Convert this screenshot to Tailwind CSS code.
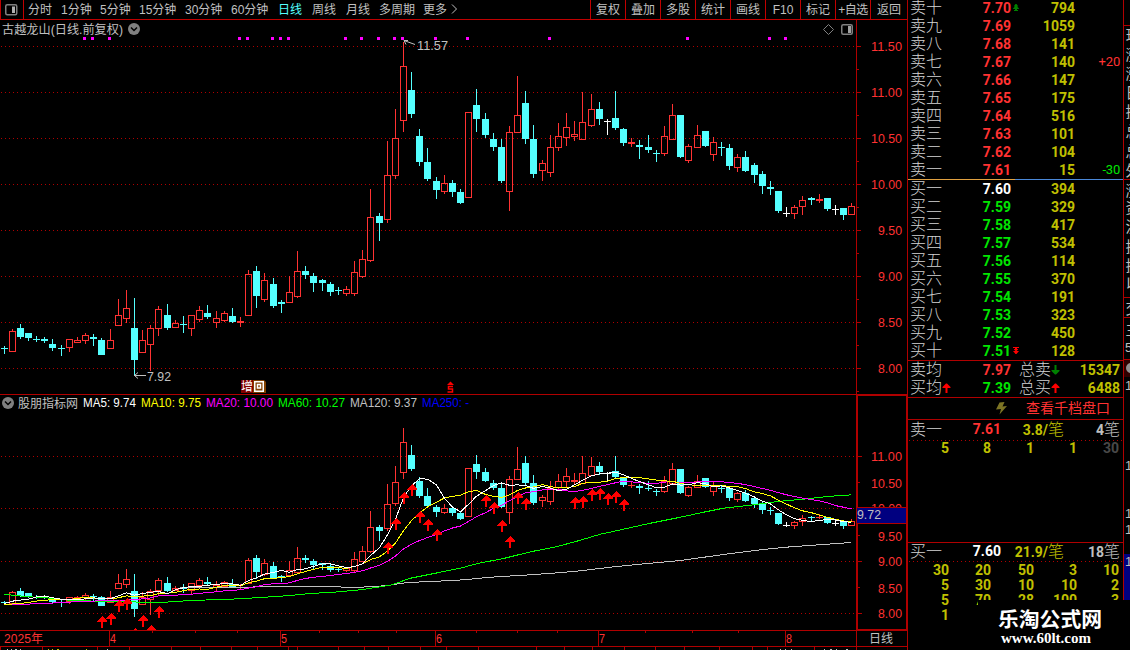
<!DOCTYPE html>
<html lang="zh-CN">
<head>
  <meta charset="UTF-8">
  <meta name="viewport" content="width=device-width, initial-scale=1.0">
  <title>古越龙山 日线</title>
  <script src="https://cdn.jsdelivr.net/npm/@tailwindcss/browser@4"></script>
</head>
<body class="bg-black overflow-hidden">
  <div class="relative flex w-[1130px] h-[650px] bg-black overflow-hidden text-[#c0c0c0] font-['Liberation_Sans','Noto_Sans_CJK_SC',sans-serif]">

    <!-- left: toolbar + charts -->
    <div class="w-[907px] shrink-0 flex flex-col">
      <div class="h-5 shrink-0 flex border-b border-[#c00000] text-[12px] leading-[20px] whitespace-nowrap">
        <div class="w-6 border-x border-[#c00000] flex items-center pl-1">
          <svg width="13" height="12" viewBox="0 0 13 12" fill="none"><rect x="0.75" y="0.75" width="11" height="10" rx="1.5" stroke="#808080" stroke-width="1.5"/><rect x="7" y="2.5" width="3" height="6.5" fill="#b0b0b0"/></svg>
        </div>
        <div class="grid grid-cols-[33px_39px_39px_46px_46px_47px_34px_34px_33px_44px_28px_12px] pl-1 w-[567px]">
          <span>分时</span><span>1分钟</span><span>5分钟</span><span>15分钟</span><span>30分钟</span><span>60分钟</span>
          <span class="text-[#54ffff]">日线</span><span>周线</span><span>月线</span><span>多周期</span><span>更多</span>
          <svg class="mt-1" width="7" height="11" viewBox="0 0 7 11" fill="none"><path d="M1 0.5L5.5 5L1 9.5" stroke="#c0c0c0"/></svg>
        </div>
        <div class="h-[19px] grid grid-cols-[35px_35px_35px_35px_35px_35px_35px_35px_36px] text-center divide-x divide-[#c00000] border-l border-[#c00000]">
          <span>复权</span><span>叠加</span><span>多股</span><span>统计</span><span>画线</span><span>F10</span><span>标记</span><span class="tracking-[-0.5px]">+自选</span><span>返回</span>
        </div>
      </div>
      <svg id="chart" class="block shrink-0" width="907" height="630" viewBox="0 20 907 630"></svg>
    </div>

    <!-- middle: order book -->
    <div class="w-[217px] shrink-0 border-x border-[#b00000] text-[14px] font-bold font-['Roboto','Noto_Sans_CJK_SC',sans-serif]">
      <div id="sells" class="-mt-px h-[180px]"></div>
      <div class="h-px flex"><div class="w-[107px] bg-[#e0a040]"></div><div class="flex-1 bg-[#4a88d8]"></div></div>
      <div id="buys" class="h-[180px]"></div>

      <div class="h-[37px] border-t border-[#b00000]">
        <div class="h-[18px] grid grid-cols-[35px_66px_8px_32px_8px_61px] pl-[2px] leading-[18px]">
          <span class="text-[16px] font-light text-[#d4d4d4]">卖均</span>
          <span class="text-right text-[#ff3232]">7.97</span><span></span>
          <span class="text-[16px] font-light text-[#d4d4d4]">总卖</span>
          <svg class="mt-1" width="9" height="10" viewBox="0 0 9 10"><path d="M3.5 0h2v5h3v1L5 9.5H4L0.5 6V5h3z" fill="#008000"/></svg>
          <span class="text-right text-[#c0c000]">15347</span>
        </div>
        <div class="h-[18px] grid grid-cols-[32px_69px_8px_32px_8px_61px] pl-[2px] leading-[18px]">
          <span class="text-[16px] font-light text-[#d4d4d4]">买均</span>
          <span class="flex justify-between text-[#00e600]"><svg class="mt-1" width="9" height="10" viewBox="0 0 9 10"><path d="M3.5 10h2V5h3V4L5 .5H4L.5 4v1h3z" fill="#ff0000"/></svg>7.39</span><span></span>
          <span class="text-[16px] font-light text-[#d4d4d4]">总买</span>
          <svg class="mt-1" width="9" height="10" viewBox="0 0 9 10"><path d="M3.5 10h2V5h3V4L5 .5H4L.5 4v1h3z" fill="#ff0000"/></svg>
          <span class="text-right text-[#c0c000]">6488</span>
        </div>
      </div>

      <div class="h-[22px] border-t border-[#b00000] flex items-center pl-[88px]">
        <svg width="11" height="13" viewBox="0 0 11 13"><path d="M3.5 0.5L8.5 0L6.5 4.5L11 4L3.5 12.5L5 7L0 7.5z" fill="#7c7424"/></svg>
        <span class="ml-[19px] text-[14px] font-normal text-[#ff3232]">查看千档盘口</span>
      </div>

      <div class="h-[123px] border-t border-[#b00000]">
        <div class="h-5 grid grid-cols-[35px_56px_63px_56px] pl-[2px] leading-[19px]">
          <span class="text-[16px] font-light text-[#d4d4d4]">卖一</span>
          <span class="text-right text-[#ff3232]">7.61</span>
          <span class="text-right text-[#c0c000]">3.8/<span class="text-[16px] font-light">笔</span></span>
          <span class="text-right">4<span class="text-[16px] font-light">笔</span></span>
        </div>
        <svg class="block" width="215" height="1"><path d="M1 .5H214" stroke="#b00000" stroke-dasharray="1 3"/></svg>
        <div class="grid grid-cols-[41px_42px_43px_43px_42px] text-right leading-[15px] text-[#c0c000]">
          <span>5</span><span>8</span><span>1</span><span>1</span><span class="text-[#484848]">30</span>
        </div>
      </div>

      <div class="h-[108px] border-t border-[#b00000] overflow-hidden">
        <div class="h-[18px] grid grid-cols-[35px_56px_63px_56px] pl-[2px] leading-[17px]">
          <span class="text-[16px] font-light text-[#d4d4d4]">买一</span>
          <span class="text-right text-white">7.60</span>
          <span class="text-right text-[#c0c000]">21.9/<span class="text-[16px] font-light">笔</span></span>
          <span class="text-right">18<span class="text-[16px] font-light">笔</span></span>
        </div>
        <svg class="block" width="215" height="1"><path d="M1 .5H214" stroke="#b00000" stroke-dasharray="1 3"/></svg>
        <div class="grid grid-cols-[41px_42px_43px_43px_42px] text-right leading-[15px] pt-px text-[#c0c000]">
          <span>30</span><span>20</span><span>50</span><span>3</span><span>10</span>
          <span>5</span><span>30</span><span>10</span><span>10</span><span>2</span>
          <span>5</span><span>70</span><span>28</span><span>100</span><span>3</span>
          <span>1</span>
        </div>
      </div>
    </div>

    <!-- right: edge of the quote panel -->
    <svg id="edge" class="shrink-0" width="6" height="650" viewBox="1124 0 6 650"></svg>

    <div class="absolute left-[978px] top-[600px] w-[152px] h-[50px] bg-black text-white pl-5 pt-2">
      <div class="text-[20.8px] leading-[20px] font-bold font-['Noto_Sans_CJK_SC',sans-serif]">乐淘公式网</div>
      <div class="pl-[3px] pt-px text-[15px] leading-[19px] font-bold font-['Liberation_Serif',serif]">www.60lt.com</div>
    </div>
  </div>

  <script>
    const RED = '#ff3232', CYAN = '#54ffff', LINE = '#b00000', GRAY = '#c0c0c0';

    // x, high, body top, body bottom, low, kind (r = up, c = down, w = flat)
    const bars = [
      [4,346,348,349,354,'c'],[12,329,331,352,352,'r'],[20,324,328,337,339,'c'],[28,333,333,338,341,'c'],
      [36,336,339,340,342,'c'],[44,337,339,341,343,'c'],[52,339,344,348,351,'c'],[61,345,348,349,356,'c'],
      [69,339,339,348,352,'r'],[77,337,340,343,343,'r'],[85,333,335,341,344,'r'],[93,334,337,339,346,'c'],
      [101,338,340,355,355,'c'],[110,329,340,349,349,'r'],[118,299,315,326,326,'r'],[126,290,308,319,323,'r'],
      [134,298,328,360,375,'c'],[142,330,340,353,353,'r'],[150,325,328,345,371,'r'],[158,306,309,329,336,'r'],
      [167,304,315,328,330,'c'],[175,320,323,328,328,'r'],[183,316,324,325,333,'c'],[191,315,315,329,336,'r'],
      [199,306,310,320,322,'r'],[207,305,313,317,319,'c'],[216,311,318,323,328,'r'],[224,311,313,321,322,'r'],
      [232,308,316,322,323,'c'],[240,317,321,323,327,'r'],[248,270,274,316,316,'r'],[256,266,271,296,308,'c'],
      [264,273,280,300,302,'r'],[273,278,284,306,308,'c'],[281,300,302,304,313,'c'],[289,276,292,303,303,'r'],
      [297,251,271,297,298,'r'],[305,266,271,275,279,'c'],[313,273,276,283,292,'c'],[322,279,280,283,291,'c'],
      [330,282,284,292,296,'c'],[338,287,290,291,295,'c'],[346,286,289,294,296,'r'],[354,261,272,294,296,'r'],
      [362,250,259,277,278,'r'],[370,189,217,261,262,'r'],[379,213,216,223,241,'c'],[387,141,175,220,223,'r'],
      [395,109,138,176,179,'r'],[403,42,66,121,132,'r'],[411,72,90,114,118,'c'],[419,129,136,162,166,'c'],
      [427,148,162,179,181,'c'],[436,177,181,190,199,'c'],[444,175,183,192,194,'r'],[452,180,183,192,197,'c'],
      [460,189,192,203,204,'c'],[468,112,112,198,198,'r'],[476,89,105,119,132,'c'],[485,113,119,135,138,'c'],
      [493,133,139,147,151,'c'],[501,139,147,181,183,'c'],[509,126,132,192,211,'r'],[517,76,115,133,133,'r'],
      [525,91,103,139,144,'c'],[533,125,139,174,178,'c'],[542,160,163,171,181,'r'],[550,135,147,173,177,'r'],
      [558,123,136,148,151,'r'],[566,113,127,138,146,'r'],[574,121,134,137,141,'r'],[582,92,122,140,140,'r'],
      [591,94,109,126,127,'r'],[599,102,109,119,125,'c'],[607,119,121,122,135,'w'],[615,91,118,128,130,'c'],
      [623,128,129,143,146,'c'],[631,138,142,144,147,'r'],[639,140,145,147,159,'c'],[648,135,147,150,153,'c'],
      [656,150,153,154,162,'c'],[664,126,136,154,156,'r'],[672,104,115,140,140,'r'],[680,115,115,157,158,'c'],
      [688,144,146,161,163,'r'],[697,125,135,148,148,'r'],[705,131,131,146,147,'c'],[713,137,142,155,161,'r'],
      [721,142,147,148,156,'c'],[729,144,148,166,170,'c'],[737,154,157,168,172,'r'],[745,151,157,171,172,'c'],
      [754,163,165,175,183,'c'],[762,171,174,186,194,'c'],[770,181,187,189,195,'c'],[778,191,191,211,213,'c'],
      [786,207,213,214,217,'w'],[794,205,207,214,219,'r'],[802,196,200,207,215,'r'],[811,197,198,200,205,'c'],
      [819,194,199,201,203,'r'],[827,198,198,209,211,'c'],[835,205,209,210,215,'w'],[843,208,208,215,220,'c'],
      [851,203,206,215,215,'r']
    ];

    const out = [];
    const rect = (x, y, w, h, c) => out.push(`<rect x="${x}" y="${y}" width="${w}" height="${h}" fill="${c}"/>`);
    const text = (s, x, y, w, c, size = 13, extra = '') =>
      out.push(`<text x="${x}" y="${y}" fill="${c}" font-size="${size}" ${w ? `textLength="${w}" lengthAdjust="spacingAndGlyphs"` : ''} ${extra}>${s}</text>`);
    const dots = y => out.push(`<path d="M1 ${y + .5}H856" stroke="${LINE}" stroke-dasharray="1 3"/>`);
    const low = y => 456.3 + (y - 92) * 0.569;

    function candles(map) {
      bars.forEach(([x, hi, t, b, lo, k]) => {
        const c = k === 'r' ? RED : k === 'c' ? CYAN : '#ffffff';
        const top = Math.round(map(t)), bot = Math.max(top + 1, Math.round(map(b)));
        const h = Math.round(map(hi)), l = Math.round(map(lo));
        if (h < top) rect(x, h, 1, top - h, c);
        if (l > bot) rect(x, bot, 1, l - bot, c);
        if (k === 'r' && bot - top > 2) {
          out.push(`<rect x="${x - 2.5}" y="${top + .5}" width="6" height="${bot - top - 1}" fill="none" stroke="${RED}"/>`);
        } else {
          rect(x - 3, top, 7, bot - top, c);
        }
      });
    }

    // frames
    out.push('<g shape-rendering="crispEdges">');
    for (let y = 46; y <= 368; y += 46) {
      dots(y);
      rect(857, y, 4, 1, LINE);
      rect(857, y + 23, 2, 1, LINE);
    }
    [456, 508, 561, 613].forEach(y => { dots(y); rect(858, y, 4, 1, LINE); });
    [482, 535, 587].forEach(y => rect(858, y, 2, 1, LINE));
    rect(856, 20, 1, 630, LINE);
    rect(0, 394, 907, 1, LINE);
    rect(0, 630, 907, 1, LINE);
    rect(0, 646, 907, 1, LINE);
    out.push(`<rect x="857" y="395" width="50" height="235" fill="none" stroke="${LINE}" stroke-width="2"/>`);
    [109, 280, 435, 598, 785].forEach(x => rect(x, 631, 1, 15, LINE));
    [152, 195, 237, 319, 358, 396, 476, 517, 557, 645, 692, 738].forEach(x => rect(x, 631, 1, 2, LINE));
    [0, 42, 97, 129, 171, 200, 231, 257, 288, 297, 338, 364, 388, 420, 446, 478, 536, 564, 592, 624, 655, 684, 719, 752, 767, 814]
      .forEach(x => rect(x, 647, 1, 3, LINE));
    [[7, 1], [11, 1], [15, 2], [20, 1], [48, 1], [52, 1], [57, 2], [86, 1], [107, 1], [780, 1], [785, 1], [791, 1], [824, 1], [830, 2], [836, 1], [846, 2]]
      .forEach(([x, w]) => rect(x, 649, w, 1, x > 40 && x < 90 ? '#c0c000' : GRAY));

    [83, 91, 108, 238, 246, 271, 279, 287, 344, 360, 377, 393, 401, 434, 466, 548, 686, 768, 784]
      .forEach(x => rect(x, 37, 3, 3, '#ff00ff'));
    candles(y => y);
    candles(low);

    // moving averages; the head of each line comes from bars before the window
    const close = bars.map(b => b[5] === 'r' ? b[2] : b[3] - 1);
    function ma(n, head, color) {
      const pts = head.slice();
      for (let i = n - 1; i < bars.length; i++) {
        let s = 0;
        for (let j = i - n + 1; j <= i; j++) s += close[j];
        pts.push([bars[i][0], low(s / n)]);
      }
      line(pts, color);
    }
    const line = (pts, color) =>
      out.push(`<polyline points="${pts.map(p => (p[0] + .5) + ',' + (p[1] + .5).toFixed(1)).join(' ')}" fill="none" stroke="${color}"/>`);

    line([[180,587.3],[300,586],[333,586],[347,587],[370,586.3],[387,585],[407,582],[437,580.7],[463,579.3],[490,576.7],[530,574.3],[557,572.3],[580,570.3],[610,566.7],[650,562.7],[680,560],[723,554],[763,549],[790,546.3],[823,544],[851,542]], GRAY);
    line([[4,594],[10,594.5],[25,596],[45,597.3],[60,598.7],[70,600],[110,601],[160,602],[190,600],[230,598.7],[260,597],[290,595],[310,593],[333,591.7],[360,589.3],[390,584.7],[410,577.7],[437,572.3],[460,567.7],[477,563],[503,558],[530,551.3],[557,546],[577,540.5],[600,533.7],[623,528.7],[650,522.7],[680,516.7],[703,511.7],[723,507.7],[753,504.3],[777,501],[803,498.7],[827,496],[851,494.3]], '#00ff00');
    ma(20, [[4,604],[30,603.5],[53,602.5],[80,601],[110,600],[133,599.3],[150,597.5]], '#ff00ff');
    ma(10, [[4,604],[20,603],[37,600.5],[50,599.3],[69,599]], '#ffff00');
    ma(5, [[4,603],[13,600.5],[30,598.3]], '#ffffff');

    // buy arrows
    out.push('<clipPath id="sub"><rect x="0" y="395" width="856" height="235"/></clipPath><g clip-path="url(#sub)" fill="#ff0000">');
    [[102,616],[111,613],[119,600],[127,598],[135,628],[143,615],[151,625],[159,606],[388,542],[396,518],[404,492],[412,484],
     [420,511],[428,519],[437,529],[486,495],[494,502],[502,520],[510,536],[518,492],[526,498],[575,497],[583,496],
     [592,489],[600,488],[608,493],[616,491],[624,499]].forEach(([x, y]) =>
      out.push(`<path d="M${x} ${y}l5 5v1h-4v6h-2v-6h-4v-1z"/>`));
    out.push('</g></g>');

    // axis labels
    ['11.50', '11.00', '10.50', '10.00', '9.50', '9.00', '8.50', '8.00'].forEach((s, i) => {
      const w = s.length > 4 ? 31 : 24;
      text(s, 902 - w, 51 + i * 46, w, RED);
    });
    [['11.00', 461], ['10.50', 488], ['10.00', 513], ['9.50', 541], ['9.00', 566], ['8.50', 593], ['8.00', 618]].forEach(([s, y]) => {
      const w = s.length > 4 ? 31 : 24;
      text(s, 902 - w, y, w, RED);
    });
    rect(857, 507, 49, 17, LINE);
    rect(857, 508, 49, 15, '#000080');
    text('9.72', 857, 519, 24, GRAY);
    text('日线', 869, 643, 24, GRAY, 12);
    text('2025年', 4, 643, 39, RED, 12);
    [['4', 110], ['5', 281], ['6', 436], ['7', 599], ['8', 786]].forEach(([s, x]) => text(s, x, 643, 6, RED, 12.5));

    // titles
    const badge = (x, y) => out.push(`<circle cx="${x}" cy="${y}" r="6" fill="#808080"/><path d="M${x - 3} ${y - 1.5}l3 3l3 -3" fill="none" stroke="#000" stroke-width="1.5"/>`);
    text('古越龙山(日线.前复权)', 2, 34, 121, GRAY, 12);
    badge(134, 29);
    badge(8, 403);
    text('股朋指标网', 18, 408, 60, GRAY, 12);
    text('MA5: 9.74', 83, 407, 53, '#ffffff', 12.5);
    text('MA10: 9.75', 141, 407, 60, '#ffff00', 12.5);
    text('MA20: 10.00', 206, 407, 67, '#ff00ff', 12.5);
    text('MA60: 10.27', 278, 407, 67, '#00ff00', 12.5);
    text('MA120: 9.37', 350, 407, 67, GRAY, 12.5);
    text('MA250: -', 422, 407, 47, '#0000ff', 12.5);
    out.push('<path d="M828.5 24.5l5 5l-5 5l-5 -5z" fill="none" stroke="#808080"/>');
    out.push('<rect x="841.75" y="24.75" width="10.5" height="9.5" rx="1.5" fill="none" stroke="#808080" stroke-width="1.5"/>');
    rect(848, 26, 3, 7, '#a0a0a0');

    // high / low marks
    out.push(`<path d="M404 40.5L415 44.5M404 40.5h4M404 40.5l2 4" fill="none" stroke="${GRAY}"/>`);
    text('11.57', 417, 50, 31, GRAY);
    out.push(`<path d="M134 375.5h12M138 372.5l-3.5 3l3.5 3" fill="none" stroke="${GRAY}"/>`);
    text('7.92', 147, 381, 24, GRAY);

    rect(241, 380, 12, 13, '#800000');
    out.push('<path d="M253 380h11l2 2v11h-13z" fill="#804000"/>');
    text('增', 241, 391, 12, '#ffffff', 12);
    out.push('<path d="M254.75 381.75h8.5v9.5h-8.5zM257.5 384.5h3v3.5h-3z" fill="none" stroke="#fff" stroke-width="1.5"/>');
    // dividend mark: S under a small arrow head
    out.push('<path d="M453 386.5h-4.500v2.500h4v3h-5" fill="none" stroke="#ff0000" stroke-width="1.5"/>');
    out.push('<path d="M450.500 381.500l3.500 3.500h-7z" fill="#ff0000"/>');
    document.getElementById('chart').innerHTML = out.join('');

    // order book rows
    const nums = ['一', '二', '三', '四', '五', '六', '七', '八', '九', '十'];
    function row(name, price, vol, color, mark, note) {
      return `<div class="h-[18px] grid grid-cols-[35px_66px_9px_55px_45px] pl-[2px] leading-[18px]">
        <span class="text-[16px] font-light text-[#d4d4d4]">${name}</span>
        <span class="text-right ${color}">${price}</span><span class="pt-[5px] pl-[2px]">${mark || ''}</span>
        <span class="text-right text-[#c0c000]">${vol}</span>
        <span class="text-right text-[13px] font-normal tracking-[-0.2px]">${note || ''}</span></div>`;
    }
    const up = '<svg width="6" height="7" viewBox="0 0 6 7"><path d="M2.500 0h1L5 2v.5H4L6 4.500V5H4v1h1v1H1V6h1V5H0v-.5l2-2H1V2z" fill="#008000"/></svg>';
    const down = '<svg width="6" height="7" viewBox="0 0 6 7"><path d="M0 0h6v1H4v1h1v.5L3.500 4H6L3.500 7h-1L0 4h2.500L1 2.500V2h1V1H0z" fill="#ff0000"/></svg>';
    const sellVol = [794, 1059, 141, 140, 147, 175, 516, 101, 104, 15];
    const buyVol = [394, 329, 417, 534, 114, 370, 191, 323, 450, 128];
    document.getElementById('sells').innerHTML = sellVol.map((v, i) =>
      row('卖' + nums[9 - i], (7.70 - i * 0.01).toFixed(2), v, 'text-[#ff3232]', i === 0 ? up : '',
        i === 3 ? '<span class="text-[#ff3232]">+20</span>' : i === 9 ? '<span class="text-[#00e600]">-30</span>' : '')).join('');
    document.getElementById('buys').innerHTML = buyVol.map((v, i) =>
      row('买' + nums[i], (7.60 - i * 0.01).toFixed(2), v, i ? 'text-[#00e600]' : 'text-white', i === 9 ? down : '')).join('');

    // clipped column on the right
    out.length = 0;
    rect(1124, 360, 6, 17, '#300000');
    out.push('<circle cx="1131" cy="368" r="5" fill="#909090"/>');
    rect(1124, 554, 6, 46, '#000080');
    [25, 179, 297, 317, 359].forEach(y => rect(1124, y, 6, 1, LINE));
    [['现', 41], ['涨', 60], ['涨', 79], ['日', 98], ['换', 117], ['总', 137], ['总', 157], ['外', 176], ['涨', 196], ['资', 213],
     ['流', 232], ['换', 252], ['换', 271], ['以', 289], ['交', 314], ['主', 335]].forEach(([s, y]) => text(s, 1125.5, y, 0, GRAY, 15));
    [['5', 352], ['1', 390], ['1', 470], ['1', 518], ['1', 534], ['1', 566]].forEach(([s, y]) => text(s, 1125, y, 0, GRAY, 13));
    document.getElementById('edge').innerHTML = out.join('');
  </script>
</body>
</html>
